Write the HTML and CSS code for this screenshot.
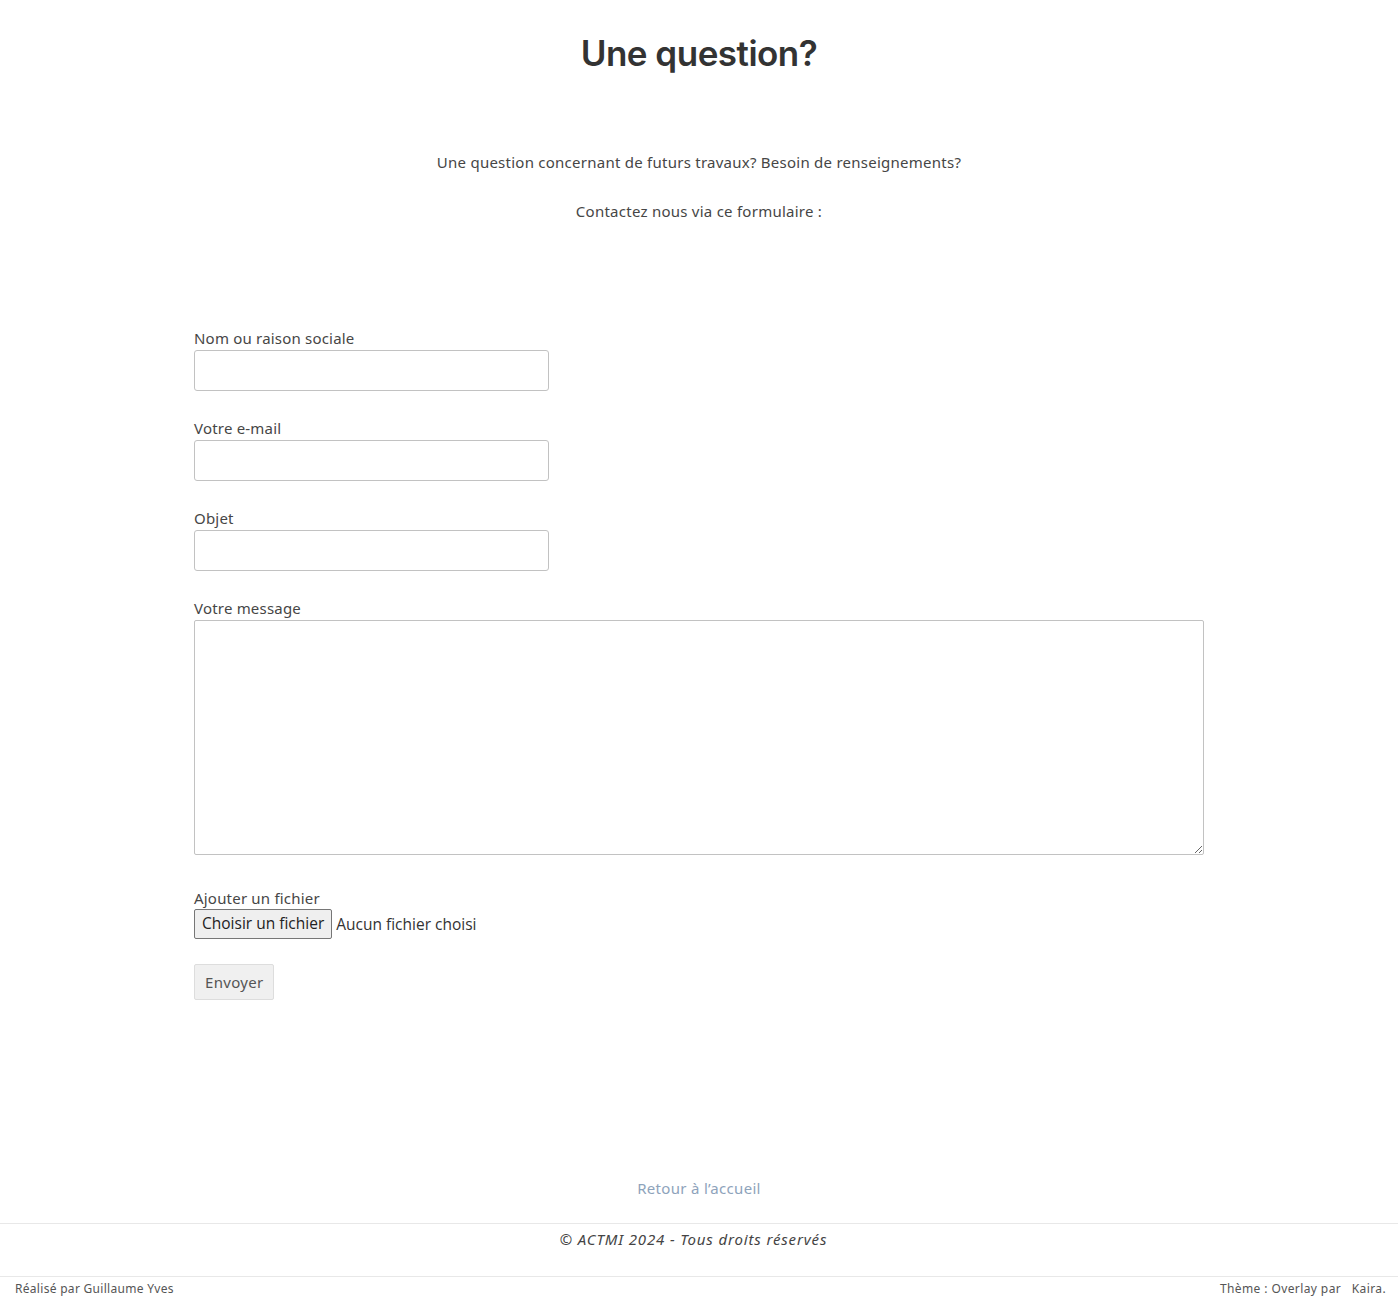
FILE: index.html
```html
<!DOCTYPE html>
<html lang="fr">
<head>
<meta charset="utf-8">
<title>Une question?</title>
<link rel="stylesheet" href="styles.css">
</head>
<body>
<main class="page">
  <h1 class="title">Une question?</h1>
  <div class="intro">
    <p>Une question concernant de futurs travaux? Besoin de renseignements?</p>
    <p>Contactez nous via ce formulaire :</p>
  </div>
  <form class="form">
    <div class="field">
      <label for="nom">Nom ou raison sociale</label>
      <input id="nom" type="text" class="input">
    </div>
    <div class="field">
      <label for="mail">Votre e-mail</label>
      <input id="mail" type="email" class="input">
    </div>
    <div class="field">
      <label for="objet">Objet</label>
      <input id="objet" type="text" class="input">
    </div>
    <div class="field">
      <label for="msg">Votre message</label>
      <textarea id="msg" class="textarea"></textarea>
    </div>
    <div class="field">
      <label>Ajouter un fichier</label>
      <div class="file">
        <span class="file-btn">Choisir un fichier</span>
        <span class="file-name">Aucun fichier choisi</span>
      </div>
    </div>
    <div class="submit-row">
      <button type="button" class="submit">Envoyer</button>
    </div>
  </form>
  <div class="back"><a href="#">Retour à l’accueil</a></div>
</main>
<footer class="footer">
  <div class="copyright">© ACTMI 2024 - Tous droits réservés</div>
  <div class="credits">
    <span class="credit-left">Réalisé par Guillaume Yves</span>
    <span class="credit-right">Thème : Overlay par &nbsp; Kaira.</span>
  </div>
</footer>
</body>
</html>
```
FILE: styles.css
```css
html, body {
  margin: 0;
  padding: 0;
  background: #fff;
}
body {
  font-family: "Noto Sans", "Open Sans", sans-serif;
  color: #464646;
  font-size: 15px;
}
.page {
  width: 1010px;
  margin: 0 auto;
  padding-top: 30px;
}
.title {
  margin: 0;
  text-align: center;
  font-family: "Inter", "Noto Sans", sans-serif;
  font-weight: 600;
  font-size: 35px;
  letter-spacing: -0.5px;
  color: #333;
  line-height: 46px;
}
.intro {
  margin-top: 76px;
  text-align: center;
}
.intro p {
  margin: 0 0 28px;
  line-height: 21px;
  letter-spacing: 0.25px;
}
.form {
  margin-top: 106px;
  display: flex;
  flex-direction: column;
}
.field {
  display: flex;
  flex-direction: column;
  align-items: flex-start;
  gap: 1px;
  margin-bottom: 27px;
}
.field label {
  line-height: 21px;
  letter-spacing: 0.2px;
}
.input {
  box-sizing: border-box;
  width: 355px;
  height: 41px;
  border: 1px solid #c2c2c2;
  border-radius: 3px;
  margin: 0;
}
.textarea {
  box-sizing: border-box;
  width: 1010px;
  height: 235px;
  border: 1px solid #c2c2c2;
  border-radius: 2px;
  margin: 0;
  resize: vertical;
}
.field:nth-child(4) { margin-bottom: 33px; }
.field:nth-child(5) { margin-bottom: 25px; gap: 0; }
.file {
  display: flex;
  align-items: center;
  gap: 4px;
  font-family: "Open Sans", "Noto Sans", sans-serif;
  font-size: 15.5px;
  color: #333;
}
.file-btn {
  box-sizing: border-box;
  height: 30px;
  line-height: 27px;
  padding: 0 7px;
  border: 1px solid #767676;
  border-radius: 2px;
  background: #efefef;
  color: #222;
}
.submit {
  box-sizing: border-box;
  height: 36px;
  padding: 0 10px;
  border: 1px solid #ddd;
  border-radius: 2px;
  background: #f0f0f0;
  font-family: "Noto Sans", "Open Sans", sans-serif;
  font-size: 15px;
  color: #555;
  letter-spacing: 0.3px;
}
.back {
  margin-top: 178px;
  text-align: center;
  padding-bottom: 25px;
}
.back a {
  color: #8ea3bb;
  text-decoration: none;
  letter-spacing: 0.3px;
}
.footer {
  border-top: 1px solid #e8e8e8;
}
.copyright {
  text-align: center;
  font-style: italic;
  color: #444;
  padding: 5px 11px 27px 0;
  letter-spacing: 0.85px;
}
.credits {
  border-top: 1px solid #e8e8e8;
  display: flex;
  justify-content: space-between;
  padding: 3px 12px 0 15px;
  font-size: 12px;
  color: #555;
  line-height: 18px;
}
.credit-left { letter-spacing: 0.3px; }
.credit-right { letter-spacing: 0.4px; }
```
